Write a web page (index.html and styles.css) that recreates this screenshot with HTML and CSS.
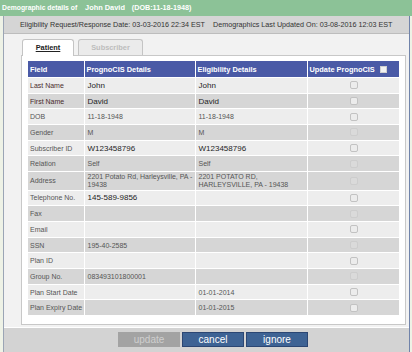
FILE: index.html
```html
<!DOCTYPE html>
<html lang="en">
<head>
    <meta charset="UTF-8">
    <title>Demographic details</title>
    <link rel="stylesheet" href="styles.css">
</head>
<body>
    <!-- Title Bar -->
    <div class="titlebar">
        <span>Demographic details of</span>
        <span class="name">John David</span>
        <span class="dob">(DOB:11-18-1948)</span>
    </div>

    <div class="frame">
        <!-- Dates -->
        <div class="infobar">
            <span class="req-date">Eligibility Request/Response Date: 03-03-2016 22:34 EST</span>
            <span>Demographics Last Updated On: 03-08-2016 12:03 EST</span>
        </div>

        <div class="content">
            <!-- Tabs -->
            <div class="tabs">
                <div class="tab active">Patient</div>
                <div class="tab">Subscriber</div>
            </div>

            <div class="panel">
                <table class="details">
                    <colgroup>
                        <col class="c-field">
                        <col class="c-prog">
                        <col class="c-elig">
                        <col class="c-upd">
                    </colgroup>
                    <thead>
                        <tr>
                            <th>Field</th>
                            <th>PrognoCIS Details</th>
                            <th>Eligibility Details</th>
                            <th>Update PrognoCIS <span class="hcb"></span></th>
                        </tr>
                    </thead>
                    <tbody>
                        <tr class="light">
                            <td class="label dark-label">Last Name</td>
                            <td class="val">John</td>
                            <td class="val">John</td>
                            <td><span class="cb"></span></td>
                        </tr>
                        <tr class="dark">
                            <td class="label dark-label">First Name</td>
                            <td class="val">David</td>
                            <td class="val">David</td>
                            <td><span class="cb"></span></td>
                        </tr>
                        <tr class="light">
                            <td class="label">DOB</td>
                            <td>11-18-1948</td>
                            <td>11-18-1948</td>
                            <td><span class="cb"></span></td>
                        </tr>
                        <tr class="dark">
                            <td class="label">Gender</td>
                            <td>M</td>
                            <td>M</td>
                            <td><span class="cb faded"></span></td>
                        </tr>
                        <tr class="light">
                            <td class="label">Subscriber ID</td>
                            <td class="val">W123458796</td>
                            <td class="val">W123458796</td>
                            <td><span class="cb"></span></td>
                        </tr>
                        <tr class="dark">
                            <td class="label">Relation</td>
                            <td>Self</td>
                            <td>Self</td>
                            <td><span class="cb faded"></span></td>
                        </tr>
                        <tr class="dark tall">
                            <td class="label">Address</td>
                            <td class="two">2201 Potato Rd, Harleysville, PA - 19438</td>
                            <td class="two">2201 POTATO RD,<br>HARLEYSVILLE, PA - 19438</td>
                            <td><span class="cb faded"></span></td>
                        </tr>
                        <tr class="light">
                            <td class="label">Telephone No.</td>
                            <td class="val">145-589-9856</td>
                            <td></td>
                            <td><span class="cb"></span></td>
                        </tr>
                        <tr class="dark">
                            <td class="label">Fax</td>
                            <td></td>
                            <td></td>
                            <td><span class="cb faded"></span></td>
                        </tr>
                        <tr class="light">
                            <td class="label">Email</td>
                            <td></td>
                            <td></td>
                            <td><span class="cb"></span></td>
                        </tr>
                        <tr class="dark">
                            <td class="label">SSN</td>
                            <td>195-40-2585</td>
                            <td></td>
                            <td><span class="cb faded"></span></td>
                        </tr>
                        <tr class="light">
                            <td class="label">Plan ID</td>
                            <td></td>
                            <td></td>
                            <td><span class="cb"></span></td>
                        </tr>
                        <tr class="dark">
                            <td class="label">Group No.</td>
                            <td>083493101800001</td>
                            <td></td>
                            <td><span class="cb faded"></span></td>
                        </tr>
                        <tr class="light">
                            <td class="label">Plan Start Date</td>
                            <td></td>
                            <td>01-01-2014</td>
                            <td><span class="cb"></span></td>
                        </tr>
                        <tr class="dark">
                            <td class="label">Plan Expiry Date</td>
                            <td></td>
                            <td>01-01-2015</td>
                            <td><span class="cb"></span></td>
                        </tr>
                    </tbody>
                </table>
            </div>
        </div>

        <!-- Buttons -->
        <div class="footer">
            <button class="btn disabled">update</button>
            <button class="btn">cancel</button>
            <button class="btn">ignore</button>
        </div>
    </div>
</body>
</html>
```

FILE: styles.css
```css
/* Page */
body {
    margin: 0;
    background-color: #eef2e6;
    font-family: "Liberation Sans", Arial, sans-serif;
}

/* Green title bar */
.titlebar {
    height: 16px;
    line-height: 16px;
    background-color: #8cc297;
    color: #ffffff;
    font-weight: bold;
    font-size: 6.8px;
    padding-left: 2px;
    white-space: nowrap;
}

.titlebar .name {
    font-size: 7.4px;
    margin-left: 6px;
}

.titlebar .dob {
    font-size: 7.2px;
    margin-left: 5px;
}

/* Outer frame */
.frame {
    margin: 0 2px 0 3px;
    border-left: 1px solid #9ba5b5;
    border-right: 1px solid #7083aa;
    background-color: #f2f2f2;
}

.infobar {
    height: 17px;
    line-height: 17px;
    background-color: #d5d5d5;
    border-bottom: 1px solid #bdbdbd;
    color: #333333;
    font-size: 7.2px;
    padding-left: 16px;
    white-space: nowrap;
    display: flex;
}

.infobar .req-date {
    width: 193px;
}

.content {
    padding: 5px 3px 2px 17px;
}

/* Tabs */
.tabs {
    display: flex;
    gap: 4px;
    padding-left: 1px;
    height: 16px;
    position: relative;
    z-index: 1;
}

.tab {
    width: 65px;
    height: 16px;
    box-sizing: border-box;
    border: 1px solid #c4c4c4;
    border-bottom: none;
    border-radius: 3px 3px 0 0;
    background-color: #ebebeb;
    color: #bdbdbd;
    font-size: 7.4px;
    font-weight: bold;
    text-align: center;
    line-height: 16px;
}

.tab.active {
    width: 52px;
    background-color: #ffffff;
    color: #222222;
    text-decoration: underline;
    height: 17px;
}

/* White panel */
.panel {
    background-color: #ffffff;
    border: 1px solid #c8c8c8;
    padding: 5px 5px 9px 6px;
}

/* Details table */
.details {
    width: 371px;
    table-layout: fixed;
    border-collapse: collapse;
    font-size: 7px;
    color: #555555;
}

.c-field { width: 56px; }
.c-prog { width: 111px; }
.c-elig { width: 112px; }
.c-upd { width: 92px; }

.details th {
    background-color: #4a5aa6;
    color: #ffffff;
    font-size: 7.4px;
    font-weight: bold;
    text-align: left;
    height: 16px;
    padding: 0 2px;
    border: 1px solid #ffffff;
    border-top: none;
    white-space: nowrap;
}

.details th:first-child {
    border-left: none;
}

.details th:last-child {
    border-right: none;
}

.details td {
    height: 14.7px;
    padding: 0 2px 0 3px;
    border: 1px solid #ffffff;
    white-space: nowrap;
    overflow: hidden;
}

.details td:first-child {
    border-left: none;
    padding-left: 2px;
}

.details td:last-child {
    border-right: none;
    text-align: center;
}

.details tr:last-child td {
    border-bottom: none;
}

.details tr.light td {
    background-color: #ededed;
}

.details tr.dark td {
    background-color: #d6d6d6;
}

.details tr.tall td {
    height: 17.5px;
}

.details td.two {
    white-space: normal;
    line-height: 8px;
}

.details td.val {
    color: #1e1e1e;
    font-size: 8px;
}

.details td.dark-label {
    color: #4a2c2c;
}

/* Checkboxes */
.cb {
    display: inline-block;
    width: 6px;
    height: 6px;
    border: 1px solid #c2c2c2;
    border-radius: 2px;
    background-color: #ececec;
    vertical-align: middle;
}

.cb.faded {
    border-color: #cdcdcd;
    background-color: #dadada;
}

.hcb {
    display: inline-block;
    width: 7px;
    height: 7px;
    background-color: #f2f2f2;
    border: 1px solid #d0d0d0;
    box-sizing: border-box;
    margin-left: 3px;
    vertical-align: -1px;
}

/* Footer with buttons */
.footer {
    border-top: 1px solid #ffffff;
    background-color: #d3d3d3;
    height: 20px;
    padding: 4px 0 0 114px;
    display: flex;
    gap: 2px;
}

.btn {
    width: 62px;
    height: 15px;
    padding: 0;
    border: 1px solid #2b4673;
    background-color: #3e6394;
    color: #ffffff;
    font-family: "Liberation Sans", Arial, sans-serif;
    font-size: 10px;
    line-height: 12px;
    cursor: pointer;
}

.btn.disabled {
    background-color: #a3a3a3;
    border-color: #a3a3a3;
    color: #cfcfcf;
}
```
